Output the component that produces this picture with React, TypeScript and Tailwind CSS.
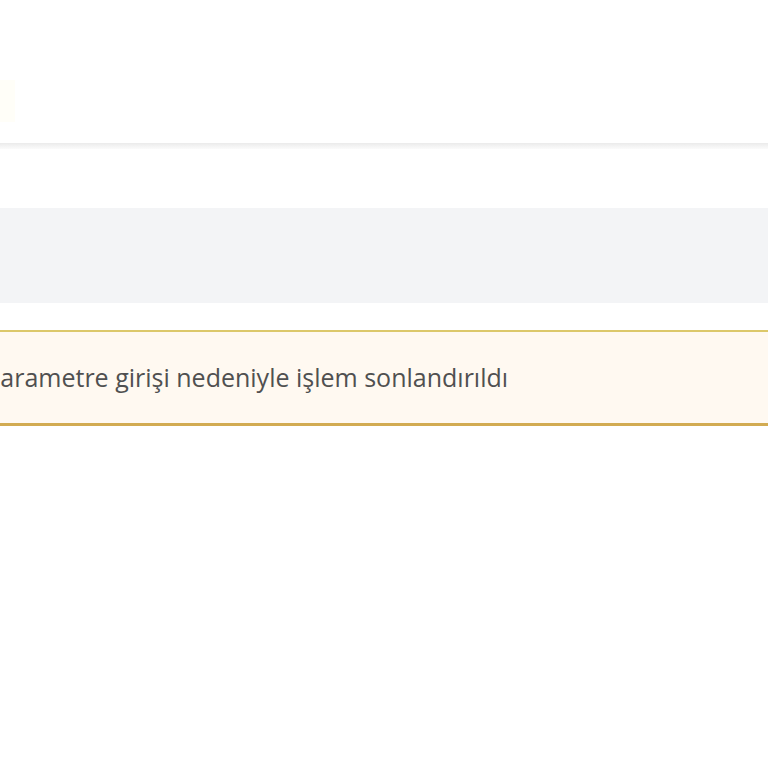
export default function App() {
  return (
    <div className="min-h-screen w-full overflow-hidden bg-white font-['Open_Sans',sans-serif]">
      {/* top bar */}
      <header className="h-[143px] bg-white relative">
        <div className="absolute left-0 top-[80px] h-[42px] w-[15px] bg-[#fffef8]" />
      </header>
      <div className="h-[6px] bg-gradient-to-b from-[#ebebeb] to-[#fbfbfb]" />

      <main className="pt-[59px]">
        <div className="h-[95px] bg-[#f3f4f6]" />

        {/* warning alert */}
        <div className="mt-[27px] -ml-[15px] flex h-[96px] items-center border-t-[2px] border-b-[3px] border-t-[#dcc86a] border-b-[#d2ab52] bg-[#fff9f1]">
          <p className="text-[25px] leading-none text-[#505050] whitespace-nowrap">
            parametre girişi nedeniyle işlem sonlandırıldı
          </p>
        </div>
      </main>
    </div>
  );
}
